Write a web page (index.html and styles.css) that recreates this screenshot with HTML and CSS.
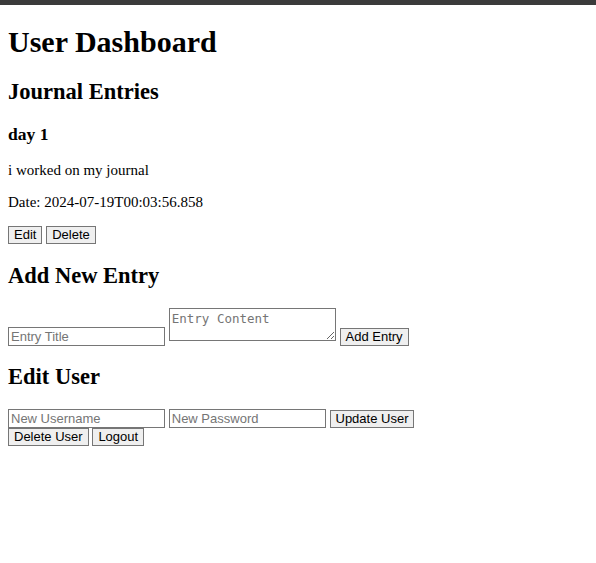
FILE: index.html
```html
<!DOCTYPE html>
<html>
<head>
<meta charset="utf-8">
<link rel="stylesheet" href="styles.css">
</head>
<body>
<div class="topbar"></div>
<div class="page">
  <h1>User Dashboard</h1>
  <h2>Journal Entries</h2>
  <div class="entry">
    <h3>day 1</h3>
    <p>i worked on my journal</p>
    <p>Date: 2024-07-19T00:03:56.858</p>
    <button class="btn">Edit</button>
    <button class="btn">Delete</button>
  </div>
  <h2>Add New Entry</h2>
  <form class="form">
    <input class="field" type="text" placeholder="Entry Title">
    <textarea class="area" placeholder="Entry Content"></textarea>
    <button class="btn" type="button">Add Entry</button>
  </form>
  <h2>Edit User</h2>
  <form class="form">
    <input class="field" type="text" placeholder="New Username">
    <input class="field" type="password" placeholder="New Password">
    <button class="btn" type="button">Update User</button>
  </form>
  <button class="btn">Delete User</button>
  <button class="btn">Logout</button>
</div>
</body>
</html>
```
FILE: styles.css
```css
html, body {
  margin: 0;
  padding: 0;
  background: #ffffff;
}
body {
  font-family: "Liberation Serif", "Times New Roman", serif;
  font-size: 15px;
  color: #000;
}
.topbar {
  height: 5px;
  background: #3b3b3b;
}
.page {
  padding: 0 8px 8px 8px;
}
h1 {
  font-size: 2em;
  margin: 0.67em 0;
  font-weight: bold;
}
h2 {
  font-size: 1.5em;
  margin: 0.83em 0;
  font-weight: bold;
}
h3 {
  font-size: 1.17em;
  margin: 1em 0;
  font-weight: bold;
}
p {
  margin: 1em 0;
}
.form {
  margin: 0;
}
.btn {
  font-family: "Liberation Sans", Arial, sans-serif;
  font-size: 13px;
  line-height: 14px;
  color: #000;
  background: #efefef;
  border: 1px solid #767676;
  border-radius: 0;
  padding: 1px 5px;
  margin: 0;
}
.field {
  font-family: "Liberation Sans", Arial, sans-serif;
  font-size: 13px;
  line-height: 13px;
  border: 1px solid #767676;
  border-radius: 0;
  padding: 1px 2px;
  width: 151px;
  margin: 0;
}
.field::placeholder {
  color: #757575;
}
.area {
  font-family: "DejaVu Sans Mono", "Liberation Mono", monospace;
  font-size: 12.5px;
  border: 1px solid #767676;
  border-radius: 0;
  padding: 2px;
  width: 161px;
  height: 27px;
  margin: 0;
  vertical-align: baseline;
}
.area::placeholder {
  color: #757575;
}
```
